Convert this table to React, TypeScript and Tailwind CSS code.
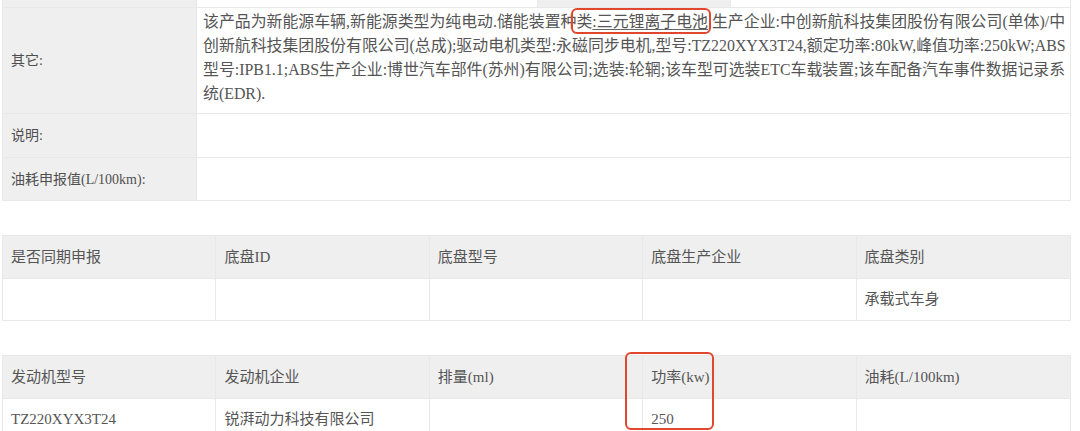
import React from 'react';

const line = 'border-[#e8e8e8]';

const chassisHead = ['是否同期申报', '底盘ID', '底盘型号', '底盘生产企业', '底盘类别'];
const chassisBody = ['', '', '', '', '承载式车身'];

const engineHead = ['发动机型号', '发动机企业', '排量(ml)', '功率(kw)', '油耗(L/100km)'];
const engineBody = ['TZ220XYX3T24', '锐湃动力科技有限公司', '', '250', ''];

const GridTable: React.FC<{ head: string[]; body: string[]; mark?: number }> = ({ head, body, mark }) => {
  return (
    <div className={`ml-[2px] w-[1069px] border-l border-r ${line} text-[15px]`}>
      <div className={`grid grid-cols-5 h-[44px] bg-[#efefef] border-t border-b ${line}`}>
        {head.map((h, i) => (
          <div key={i} className={`relative flex items-center pl-[8px] ${i < 4 ? `border-r ${line}` : ''}`}>
            {h}
            {mark === i && (
              <span className="absolute left-[-18px] top-[-4px] w-[89px] h-[78px] border-2 border-[#e1462f] rounded-[6px] z-10" />
            )}
          </div>
        ))}
      </div>
      <div className={`grid grid-cols-5 h-[42px] bg-white border-b ${line}`}>
        {body.map((b, i) => (
          <div key={i} className={`flex items-center pl-[8px] ${i < 4 ? `border-r ${line}` : ''}`}>
            {b}
          </div>
        ))}
      </div>
    </div>
  );
};

const App: React.FC = () => {
  return (
    <div className="w-[1080px] h-[431px] overflow-hidden bg-white text-[#555] font-['Liberation_Serif','Noto_Sans_CJK_SC',serif]">
      <div className={`ml-[2px] w-[1069px] border-l border-r ${line}`}>
        {/* row cut off at the top of the picture */}
        <div className={`grid grid-cols-[194px_341px_193px_1fr] h-[8px] border-b ${line}`}>
          <div className={`bg-[#efefef] border-r ${line}`} />
          <div className={`bg-white border-r ${line}`} />
          <div className={`bg-[#efefef] border-r ${line}`} />
          <div className="bg-white" />
        </div>

        <div className={`grid grid-cols-[194px_1fr] border-b ${line}`}>
          <div className={`flex items-center pl-[8px] bg-[#efefef] border-r ${line} text-[14px] text-[#4f4f4f]`}>
            其它:
          </div>
          <div className="pl-[6px] pt-[2px] pb-[7px] text-[15.9px] leading-[24px] whitespace-nowrap">
            <div>
              该产品为新能源车辆,新能源类型为纯电动.储能装置种
              <span className="relative">
                类<span className="underline decoration-[#666] underline-offset-2">:三元锂离子电池</span>
                <span className="absolute -left-[5px] -right-[3px] -top-[5px] -bottom-[4px] border-2 border-[#e1462f] rounded-[6px]" />
              </span>
              ,生产企业:中创新航科技集团股份有限公司(单体)/中
            </div>
            <div>创新航科技集团股份有限公司(总成);驱动电机类型:永磁同步电机,型号:TZ220XYX3T24,额定功率:80kW,峰值功率:250kW;ABS</div>
            <div>型号:IPB1.1;ABS生产企业:博世汽车部件(苏州)有限公司;选装:轮辋;该车型可选装ETC车载装置;该车配备汽车事件数据记录系</div>
            <div>统(EDR).</div>
          </div>
        </div>

        <div className={`grid grid-cols-[194px_1fr] h-[44px] border-b ${line}`}>
          <div className={`flex items-center pl-[8px] bg-[#efefef] border-r ${line} text-[14px] text-[#4f4f4f]`}>
            说明:
          </div>
          <div className="bg-white" />
        </div>

        <div className={`grid grid-cols-[194px_1fr] h-[43px] border-b ${line}`}>
          <div className={`flex items-center pl-[8px] bg-[#efefef] border-r ${line} text-[14px] text-[#4f4f4f]`}>
            油耗申报值(L/100km):
          </div>
          <div className="bg-white" />
        </div>
      </div>

      <div className="mt-[34px]">
        <GridTable head={chassisHead} body={chassisBody} />
      </div>

      <div className="mt-[34px]">
        <GridTable head={engineHead} body={engineBody} mark={3} />
      </div>
    </div>
  );
};

export default App;
